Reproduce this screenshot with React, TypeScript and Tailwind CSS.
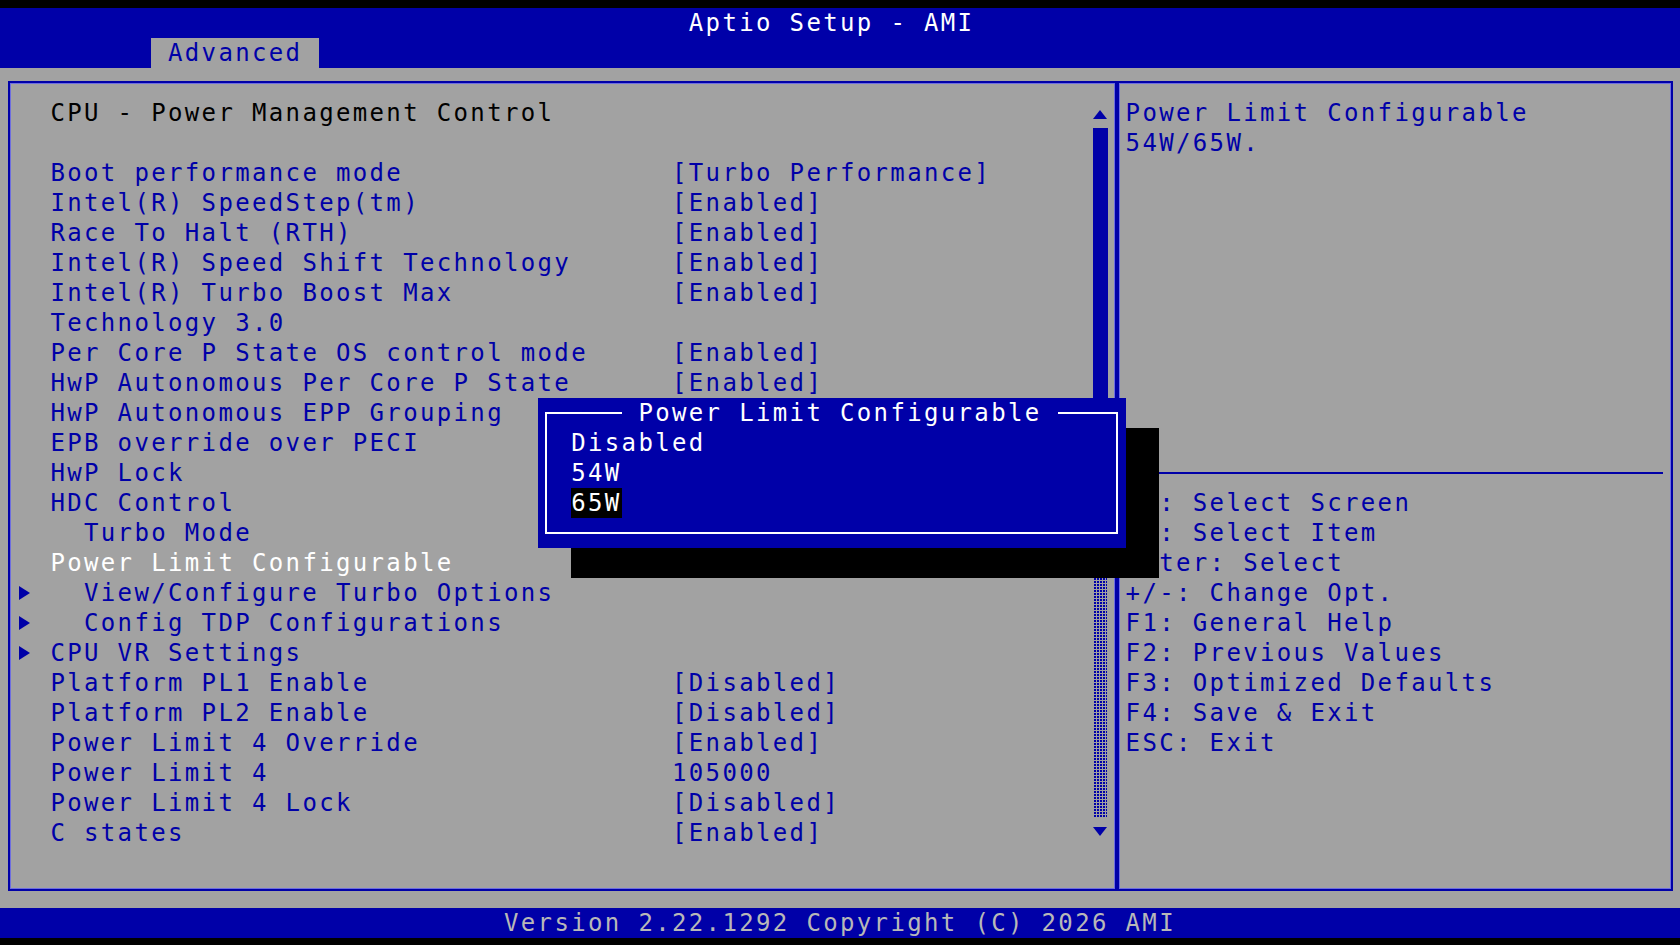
import React from "react";

type Row = {
  label?: string;
  value?: string;
  indent?: boolean;
  sub?: boolean;
  tone?: "title" | "item" | "selected";
};

// values of rows 13-18 sit under the open popup and its shadow, so they are left out
const rows: Row[] = [
  { label: "CPU - Power Management Control", tone: "title" },
  {},
  { label: "Boot performance mode", value: "[Turbo Performance]" },
  { label: "Intel(R) SpeedStep(tm)", value: "[Enabled]" },
  { label: "Race To Halt (RTH)", value: "[Enabled]" },
  { label: "Intel(R) Speed Shift Technology", value: "[Enabled]" },
  { label: "Intel(R) Turbo Boost Max", value: "[Enabled]" },
  { label: "Technology 3.0" },
  { label: "Per Core P State OS control mode", value: "[Enabled]" },
  { label: "HwP Autonomous Per Core P State", value: "[Enabled]" },
  { label: "HwP Autonomous EPP Grouping" },
  { label: "EPB override over PECI" },
  { label: "HwP Lock" },
  { label: "HDC Control" },
  { label: "Turbo Mode", indent: true },
  { label: "Power Limit Configurable", tone: "selected" },
  { label: "View/Configure Turbo Options", indent: true, sub: true },
  { label: "Config TDP Configurations", indent: true, sub: true },
  { label: "CPU VR Settings", sub: true },
  { label: "Platform PL1 Enable", value: "[Disabled]" },
  { label: "Platform PL2 Enable", value: "[Disabled]" },
  { label: "Power Limit 4 Override", value: "[Enabled]" },
  { label: "Power Limit 4", value: "105000" },
  { label: "Power Limit 4 Lock", value: "[Disabled]" },
  { label: "C states", value: "[Enabled]" },
];

const keyHelp = [
  "\u2192\u2190: Select Screen",
  "\u2191\u2193: Select Item",
  "Enter: Select",
  "+/-: Change Opt.",
  "F1: General Help",
  "F2: Previous Values",
  "F3: Optimized Defaults",
  "F4: Save & Exit",
  "ESC: Exit",
];

const options = ["Disabled", "54W", "65W"];

const SubArrow = () => (
  <svg width="12" height="14" viewBox="0 0 12 14" aria-hidden>
    <path d="M1 0 L12 7 L1 14 Z" fill="#0000a8" />
  </svg>
);

const ScrollBar = () => (
  <div className="flex w-[16.8px] flex-col pt-[14.5px]">
    <div className="flex h-[30px] items-end justify-center pb-[9px]">
      <svg width="14" height="9" viewBox="0 0 14 9" aria-hidden>
        <path d="M7 0 L14 9 L0 9 Z" fill="#0000a8" />
      </svg>
    </div>
    <div className="mx-auto h-[390px] w-[15px] bg-[#0000a8]" />
    <div className="flex h-[300px] justify-center">
      <svg width="13" height="300" aria-hidden>
        <defs>
          <pattern id="track" width="3" height="3" patternUnits="userSpaceOnUse">
            <rect width="3" height="3" fill="#a2a2a2" />
            <rect width="2" height="2" fill="#0000a8" />
          </pattern>
        </defs>
        <rect width="13" height="300" fill="url(#track)" />
      </svg>
    </div>
    <div className="flex h-[30px] items-start justify-center pt-[9px]">
      <svg width="14" height="9" viewBox="0 0 14 9" aria-hidden>
        <path d="M0 0 L14 0 L7 9 Z" fill="#0000a8" />
      </svg>
    </div>
  </div>
);

export default function App() {
  return (
    <div className="relative h-[945px] w-[1680px] overflow-hidden bg-black pt-[7.5px] font-['DejaVu_Sans_Mono',monospace] text-[24px] leading-[30px] tracking-[2.35px] whitespace-pre">
      {/* title bar */}
      <div className="h-[30px] bg-[#0000a8] pl-[688.8px] text-white">Aptio Setup - AMI</div>
      <div className="flex h-[30px] bg-[#0000a8] pl-[151.2px]">
        <div className="h-full w-[168px] bg-[#a2a2a2] pl-[16.8px] text-[#0000a8]">Advanced</div>
      </div>

      {/* main screen */}
      <div className="flex h-[840px] bg-[#a2a2a2] pl-[8px] pt-[13.5px]">
        <div className="flex h-[810px] w-[1109px] border-2 border-[#0000a8] shadow-[inset_0_0_0_1px_#6e6ee0]">
          <div className="flex w-[1082px] flex-col pl-[6.8px] pt-[14.5px]">
            {rows.map((r, i) => (
              <div key={i} className="flex h-[30px]">
                <div className="flex w-[33.6px] items-center pl-[1px]">{r.sub && <SubArrow />}</div>
                <div
                  className={
                    r.tone === "title"
                      ? "w-[621.6px] text-black"
                      : r.tone === "selected"
                        ? "w-[621.6px] text-white"
                        : r.indent
                          ? "w-[621.6px] pl-[33.6px] text-[#0000a8]"
                          : "w-[621.6px] text-[#0000a8]"
                  }
                >
                  {r.label}
                </div>
                <div className="text-[#0000a8]">{r.value}</div>
              </div>
            ))}
          </div>
          <ScrollBar />
        </div>

        <div className="flex h-[810px] w-[556px] flex-col border-2 border-[#0000a8] pl-[6.6px] pt-[14.5px] text-[#0000a8] shadow-[inset_0_0_0_1px_#6e6ee0]">
          <div className="h-[30px]">Power Limit Configurable</div>
          <div className="h-[30px]">54W/65W.</div>
          <div className="h-[300px]" />
          <div className="flex h-[30px] items-center">
            <div className="h-[2px] w-[537.6px] bg-[#0000a8]" />
          </div>
          {keyHelp.map((k) => (
            <div key={k} className="h-[30px]">
              {k}
            </div>
          ))}
        </div>
      </div>

      <div className="h-[30px] bg-[#0000a8] pl-[504px] text-[#b8b8b8]">
        Version 2.22.1292 Copyright (C) 2026 AMI
      </div>

      {/* popup shadow and popup */}
      <div className="absolute left-[571.2px] top-[427.5px] h-[150px] w-[588px] bg-black" />
      <div className="absolute left-[537.6px] top-[397.5px] flex h-[150px] w-[588px] flex-col bg-[#0000a8] text-white">
        <div className="absolute bottom-[14px] left-[7.4px] right-[7.4px] top-[14px] border-2 border-white" />
        <div className="relative h-[30px] pl-[84px]">
          <span className="bg-[#0000a8] px-[16.8px]">Power Limit Configurable</span>
        </div>
        {options.map((o) => (
          <div key={o} className="relative flex h-[30px] pl-[33.6px]">
            <span className={o === "65W" ? "bg-black" : ""}>{o}</span>
          </div>
        ))}
      </div>
    </div>
  );
}
